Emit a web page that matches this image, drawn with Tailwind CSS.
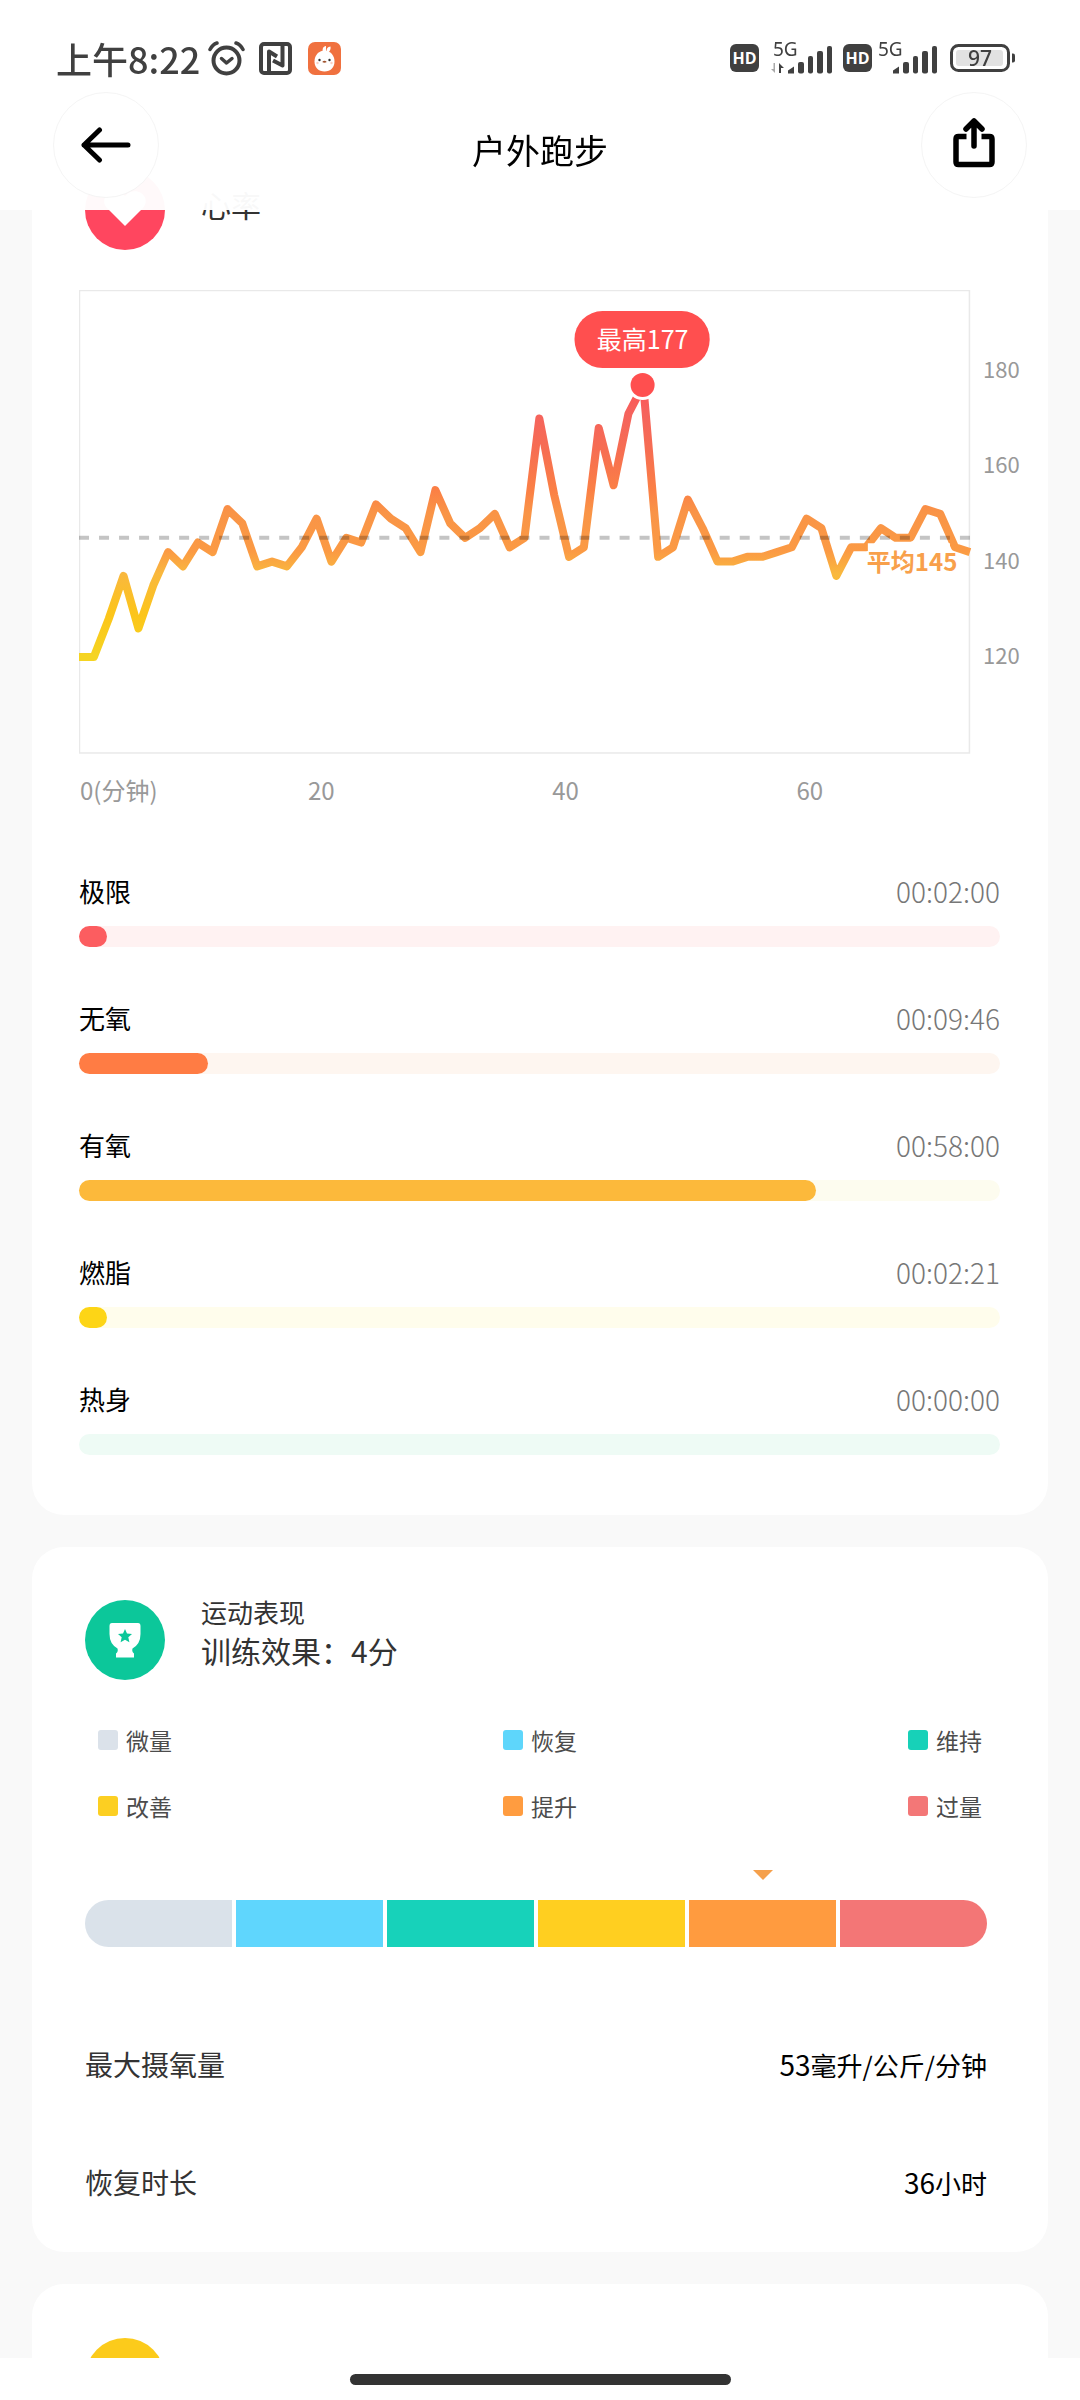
<!DOCTYPE html>
<html lang="zh-CN">
<head>
  <meta charset="UTF-8" />
  <meta name="viewport" content="width=device-width, initial-scale=1.0"/>
  <title>户外跑步</title>
  <script src="https://cdn.jsdelivr.net/npm/@tailwindcss/browser@4"></script>
</head>
<body class="h-screen overflow-hidden bg-[#f9f9f9] font-['Noto_Sans_CJK_SC',sans-serif] text-[#333]">

  <!-- Header -->
  <header class="fixed inset-x-0 top-0 z-10 h-[210px] bg-white/97">
    <div class="flex items-center justify-between pt-9 pl-14 pr-16 h-20 text-[#404040]">
      <div class="flex items-center">
        <span class="text-[36px] leading-[44px] font-medium">上午8:22</span>
        <svg class="ml-2 w-[37px] h-[35px]" viewBox="0 0 37 35" fill="none" stroke="currentColor" stroke-linecap="round" stroke-linejoin="round">
          <circle cx="18.500" cy="19.500" r="13" stroke-width="4"/>
          <path d="M13.500 17.500l5 4.500 5.500-4.500" stroke-width="3.500"/>
          <path d="M2 8.500q2.500-5 7-6.500M35 8.500q-2.500-5-7-6.500" stroke-width="3.500"/>
        </svg>
        <svg class="ml-[14px] w-[33px] h-[33px]" viewBox="0 0 33 33" fill="none" stroke="currentColor" stroke-linejoin="round">
          <rect x="2" y="2" width="29" height="29" rx="3" stroke-width="4"/>
          <path d="M10 30V9.500L18 14.500" stroke-width="4"/>
          <path d="M14 18.500l9.500 5V3" stroke-width="4"/>
        </svg>
        <svg class="ml-4 w-[33px] h-[33px]" viewBox="0 0 33 33">
          <rect width="33" height="33" rx="7" fill="#f0713f"/>
          <path d="M15 10C14 7 15 4.500 18 4l0 5zM18.500 9.500c0-3 1-4.500 4-5 .5 2-.5 5-2.500 6z" fill="#fff"/>
          <path d="M16.500 8.500c6 0 10 5 10 11s-4 10-10 10-10-4-10-10 4-11 10-11z" fill="#fff"/>
          <circle cx="11.500" cy="18" r="1.200" fill="#333"/>
          <circle cx="21.500" cy="18" r="1.200" fill="#333"/>
          <path d="M14.200 20q2.300-2.400 4.600 0-2.300 1.500-4.600 0z" fill="#a0522d"/>
          <circle cx="9.500" cy="21" r="1.200" fill="#fbd0c4"/><circle cx="23.500" cy="21" r="1.200" fill="#fbd0c4"/>
        </svg>
      </div>
      <div class="flex items-center">
        <span class="flex h-7 w-[29px] items-center justify-center rounded-md bg-[#404040] font-['Open_Sans',sans-serif] text-[16px] font-bold text-white">HD</span>
        <svg class="ml-3 h-8 w-[62px] overflow-visible" viewBox="0 0 62 32" fill="currentColor">
          <text x="2" y="14" font-size="19" class="font-['Noto_Sans',sans-serif]">5G</text>
          <path d="M4 21v10l-4-4h2.500V21z" opacity=".45"/>
          <path d="M8 31V21l5 5h-3v5z"/>
          <path d="M17 31.500v-3l6-4v7z"/>
          <rect x="27" y="20" width="6" height="11.500" rx="2"/>
          <rect x="37" y="14" width="5" height="17.500" rx="2"/>
          <rect x="46" y="9" width="6" height="22.500" rx="2"/>
          <rect x="56" y="4" width="5" height="27.500" rx="2"/>
        </svg>
        <span class="ml-2.5 flex h-7 w-[29px] items-center justify-center rounded-md bg-[#404040] font-['Open_Sans',sans-serif] text-[16px] font-bold text-white">HD</span>
        <svg class="ml-1 h-8 w-[62px] overflow-visible" viewBox="0 0 62 32" fill="currentColor">
          <text x="2" y="14" font-size="19" class="font-['Noto_Sans',sans-serif]">5G</text>
          <path d="M17 31.500v-3l6-4v7z"/>
          <rect x="27" y="20" width="6" height="11.500" rx="2"/>
          <rect x="37" y="14" width="5" height="17.500" rx="2"/>
          <rect x="46" y="9" width="6" height="22.500" rx="2"/>
          <rect x="56" y="4" width="5" height="27.500" rx="2"/>
        </svg>
        <svg class="ml-3 h-7 w-[66px]" viewBox="0 0 66 28">
          <rect x="1.500" y="1.500" width="57" height="25" rx="7" fill="#fff" stroke="#404040" stroke-width="3"/>
          <rect x="6" y="6" width="47" height="16" rx="3" fill="#e2e2e2"/>
          <path d="M62 9.500h1q2 0 2 2v5q0 2-2 2h-1z" fill="#404040"/>
          <text x="30" y="22" font-size="21" text-anchor="middle" fill="#404040" class="font-['Noto_Sans',sans-serif] font-medium">97</text>
        </svg>
      </div>
    </div>
    <div class="flex items-start justify-between px-[53px] pt-3">
      <button type="button" aria-label="返回" class="flex size-[106px] items-center justify-center rounded-full border border-[#f4f4f4] bg-white text-black">
        <svg class="w-[50px] h-9" viewBox="0 0 50 36" fill="none" stroke="currentColor" stroke-width="5" stroke-linecap="round" stroke-linejoin="round"><path d="M47 18H3M18.500 3L3 18l15.500 15"/></svg>
      </button>
      <h1 class="pt-[34px] text-[34px] leading-[48px] text-black">户外跑步</h1>
      <button type="button" aria-label="分享" class="flex size-[106px] items-start justify-center rounded-full border border-[#f4f4f4] bg-white pt-6 text-black">
        <svg class="w-11 h-[51px]" viewBox="0 0 44 51" fill="none" stroke="currentColor" stroke-width="5.500" stroke-linejoin="round"><path d="M14.500 19.500H6.500q-2.500 0-2.500 2.500v23q0 2.500 2.500 2.500h31q2.500 0 2.500-2.500v-23q0-2.500-2.500-2.500H29.500"/><path d="M22 29V4M14 12l8-8 8 8" stroke-linecap="round"/></svg>
      </button>
    </div>
  </header>

  <main class="flex flex-col gap-8 px-8 pt-[116px]">

    <!-- Heart rate -->
    <section class="rounded-[32px] bg-white pt-[54px] pr-12 pb-[60px] pl-[47px]">
      <div class="flex px-[6px]">
        <svg class="size-20" viewBox="0 0 80 80">
          <circle cx="40" cy="40" r="40" fill="#ff465f"/>
          <path d="M40 56L22 38c-9-10 6-24 18-12 12-12 27 2 18 12z" fill="#fff"/>
        </svg>
        <h2 class="ml-9 pt-3 text-[30px] leading-[44px]">心率</h2>
      </div>

      <div class="-mr-5 mt-10">
        <svg class="w-full" viewBox="0 0 940 520">
          <defs>
            <linearGradient id="zones" gradientUnits="userSpaceOnUse" x1="0" y1="366" x2="0" y2="90">
              <stop offset="0" stop-color="#f5d422"/>
              <stop offset=".15" stop-color="#fcc519"/>
              <stop offset=".3" stop-color="#f9b83e"/>
              <stop offset=".38" stop-color="#fb9a44"/>
              <stop offset=".52" stop-color="#f99447"/>
              <stop offset=".6" stop-color="#fb8045"/>
              <stop offset=".75" stop-color="#f66d52"/>
              <stop offset=".88" stop-color="#f5635d"/>
              <stop offset="1" stop-color="#ff5053"/>
            </linearGradient>
          </defs>
          <rect x=".5" y=".5" width="889" height="462" fill="none" stroke="#e9e9e9" stroke-width="1.500"/>
          <polyline id="heartLine" fill="none" stroke="url(#zones)" stroke-width="8" stroke-linejoin="round"/>
          <path d="M0 247.500H890" stroke="#000" stroke-opacity=".23" stroke-width="4" stroke-dasharray="10 10"/>
          <rect x="788" y="253" width="82" height="38" fill="#fff"/>
          <text x="787" y="281" font-size="24" fill="#f8a04b" class="font-bold">平均145</text>

          <circle cx="563" cy="95" r="15" fill="#fff"/>
          <circle cx="563" cy="95" r="12" fill="#ff4f4f"/>
          <rect x="495" y="21" width="135" height="57" rx="28" fill="#ff4f4f"/>
          <text x="563" y="59" font-size="25" text-anchor="middle" fill="#fff">最高177</text>

          <g font-size="22" fill="#999">
            <text x="903" y="88">180</text>
            <text x="903" y="183">160</text>
            <text x="903" y="279">140</text>
            <text x="903" y="374">120</text>
          </g>
          <g font-size="24" fill="#999">
            <text x="1" y="509">0(分钟)</text>
            <text x="242" y="509" text-anchor="middle">20</text>
            <text x="486" y="509" text-anchor="middle">40</text>
            <text x="730" y="509" text-anchor="middle">60</text>
          </g>
        </svg>
      </div>

      <div class="mt-[60px] space-y-[51px]">
        <div>
          <div class="flex justify-between leading-10">
            <span class="text-[26px] text-black">极限</span>
            <span class="text-[28px] font-light text-[#777]">00:02:00</span>
          </div>
          <div class="mt-[15px] h-[21px] rounded-full bg-[#fff2f2]"><div class="h-full rounded-full bg-[#fc5d60]" style="width: 3%"></div></div>
        </div>
        <div>
          <div class="flex justify-between leading-10">
            <span class="text-[26px] text-black">无氧</span>
            <span class="text-[28px] font-light text-[#777]">00:09:46</span>
          </div>
          <div class="mt-[15px] h-[21px] rounded-full bg-[#fef6f0]"><div class="h-full rounded-full bg-[#ff7c44]" style="width: 14%"></div></div>
        </div>
        <div>
          <div class="flex justify-between leading-10">
            <span class="text-[26px] text-black">有氧</span>
            <span class="text-[28px] font-light text-[#777]">00:58:00</span>
          </div>
          <div class="mt-[15px] h-[21px] rounded-full bg-[#fdfcef]"><div class="h-full rounded-full bg-[#fcb93b]" style="width: 80%"></div></div>
        </div>
        <div>
          <div class="flex justify-between leading-10">
            <span class="text-[26px] text-black">燃脂</span>
            <span class="text-[28px] font-light text-[#777]">00:02:21</span>
          </div>
          <div class="mt-[15px] h-[21px] rounded-full bg-[#fffdec]"><div class="h-full rounded-full bg-[#fdd516]" style="width: 3%"></div></div>
        </div>
        <div>
          <div class="flex justify-between leading-10">
            <span class="text-[26px] text-black">热身</span>
            <span class="text-[28px] font-light text-[#777]">00:00:00</span>
          </div>
          <div class="mt-[15px] h-[21px] rounded-full bg-[#eefbf5]"></div>
        </div>
      </div>
    </section>

    <!-- Performance -->
    <section class="rounded-[32px] bg-white pt-[53px] pr-[61px] pb-[49px] pl-[53px]">
      <div class="flex">
        <svg class="size-20" viewBox="0 0 80 80">
          <circle cx="40" cy="40" r="40" fill="#0cc79a"/>
          <path d="M27 23h26q2.500 0 2.500 3v8q0 10-8 14.500-1 3 1.500 5v4H31v-4q2.500-2 1.500-5-8-4.500-8-14.500v-8q0-3 2.500-3z" fill="#fff"/>
          <path d="M40 29l2 4.500 5 .5-3.700 3.300 1.100 4.900-4.400-2.500-4.400 2.500 1.100-4.900L33 34l5-.5z" fill="#0cc79a"/>
        </svg>
        <div class="ml-9">
          <h2 class="text-[26px] leading-6">运动表现</h2>
          <p class="text-[30px] leading-[52px]">训练效果：4分</p>
        </div>
      </div>

      <ul class="mt-11 space-y-[34px] pr-[5px] pl-[13px] text-[23px] leading-8 text-[#4c4c4c]">
        <li class="flex justify-between">
          <span class="flex items-center gap-2"><i class="size-5 rounded-[3px] bg-[#dbe2ea]"></i>微量</span>
          <span class="flex items-center gap-2"><i class="size-5 rounded-[3px] bg-[#5ed6fb]"></i>恢复</span>
          <span class="flex items-center gap-2"><i class="size-5 rounded-[3px] bg-[#17d1b8]"></i>维持</span>
        </li>
        <li class="flex justify-between">
          <span class="flex items-center gap-2"><i class="size-5 rounded-[3px] bg-[#fccf22]"></i>改善</span>
          <span class="flex items-center gap-2"><i class="size-5 rounded-[3px] bg-[#ff9c40]"></i>提升</span>
          <span class="flex items-center gap-2"><i class="size-5 rounded-[3px] bg-[#f37777]"></i>过量</span>
        </li>
      </ul>

      <div class="mt-12 grid grid-cols-6 gap-1">
        <svg class="col-start-5 h-2.5 w-5 justify-self-center" viewBox="0 0 20 10"><path d="M0 0h20L10 10z" fill="#f5a04c"/></svg>
      </div>
      <div class="mt-5 grid h-[47px] grid-cols-6 gap-1 overflow-hidden rounded-full">
        <div class="bg-[#dae2ea]"></div>
        <div class="bg-[#5fd6fd]"></div>
        <div class="bg-[#17d2ba]"></div>
        <div class="bg-[#ffcf20]"></div>
        <div class="bg-[#ff9b3f]"></div>
        <div class="bg-[#f37676]"></div>
      </div>

      <dl class="mt-[97px] space-y-[77px] leading-10">
        <div class="flex justify-between">
          <dt class="text-[28px]">最大摄氧量</dt>
          <dd class="text-[26px] text-black"><span class="text-[28px]">53</span>毫升/公斤/分钟</dd>
        </div>
        <div class="flex justify-between">
          <dt class="text-[28px]">恢复时长</dt>
          <dd class="text-[26px] text-black"><span class="text-[28px]">36</span>小时</dd>
        </div>
      </dl>
    </section>

    <section class="rounded-t-[32px] bg-white px-[53px] pt-[54px]">
      <div class="size-20 rounded-full bg-[#fccb1b]"></div>
    </section>
  </main>

  <!-- Home indicator -->
  <footer class="fixed inset-x-0 bottom-0 z-10 flex h-[42px] justify-center bg-white pt-4">
    <div class="h-[11px] w-[381px] rounded-full bg-[#333]"></div>
  </footer>

  <script>
    const heartRate = [
      120, 120, 128, 137, 126, 135, 142, 139, 144, 142, 151, 148, 139, 140, 139, 143,
      149, 140, 145, 144, 152, 149, 147, 142, 155, 148, 145, 147, 150, 143, 145, 170,
      154, 141, 143, 168, 156, 171, 177, 141, 143, 153, 147, 140, 140, 141, 141, 142,
      143, 149, 147, 137, 143, 143, 147, 145, 145, 151, 150, 143, 142
    ];

    const step = 890 / (heartRate.length - 1);
    const points = heartRate.map((bpm, i) => `${i * step},${247.5 - (bpm - 145) * 4.765}`);
    document.getElementById("heartLine").setAttribute("points", points.join(" "));
  </script>
</body>
</html>
